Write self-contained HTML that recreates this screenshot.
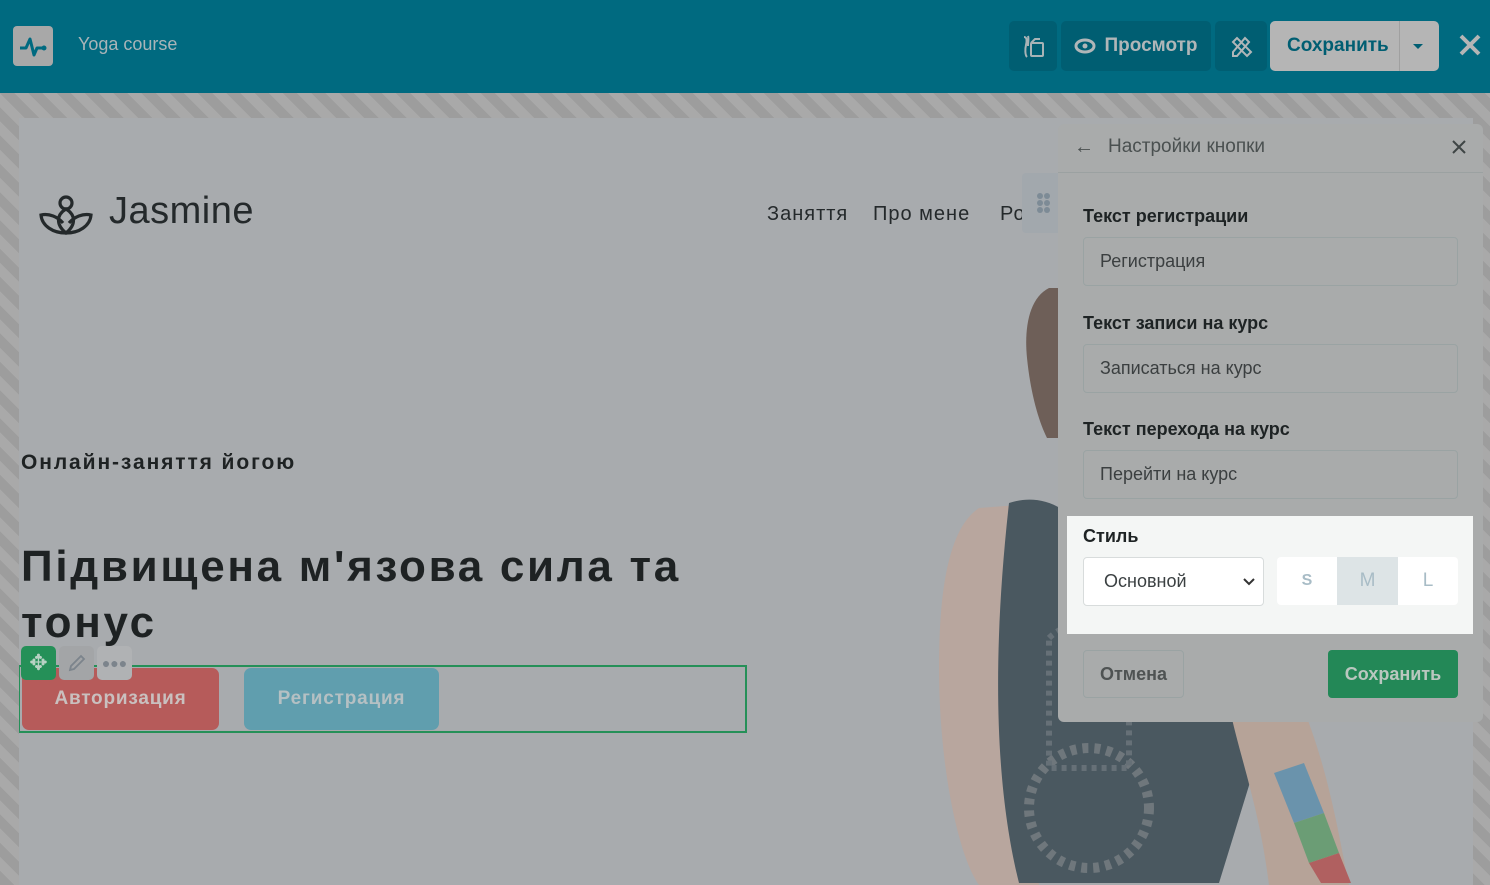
<!DOCTYPE html>
<html><head><meta charset="utf-8"><style>
*{box-sizing:border-box;margin:0;padding:0}
body{width:1490px;height:885px;overflow:hidden;font-family:"Liberation Sans","DejaVu Sans",sans-serif;background:#a3a3a3;position:relative}
.top{position:absolute;left:0;top:0;width:1490px;height:93px;background:#006a80}
.stripes{position:absolute;left:0;top:93px;width:1490px;height:792px;background:repeating-linear-gradient(45deg,#9d9d9d 0 10px,#a9a9a9 10px 20px)}
.page{position:absolute;left:19px;top:118px;width:1454px;height:767px;background:#a8abae;overflow:hidden}
.abs{position:absolute}
.btn{position:absolute;border-radius:5px;display:flex;align-items:center;justify-content:center;font-weight:bold}
.lbl{position:absolute;left:25px;font-size:18px;font-weight:bold;color:#1e2324}
.inp{position:absolute;left:25px;width:375px;height:49px;border:1px solid #9aa3a3;border-radius:4px;font-size:18px;color:#3b3f40;padding-left:16px;display:flex;align-items:center}
.nav{position:absolute;top:85px;font-size:20px;color:#24292b;letter-spacing:1px;white-space:nowrap}
</style></head><body>
<div class="top">
 <div class="abs" style="left:13px;top:26px;width:40px;height:40px;background:#a8a8a8;border-radius:4px">
  <svg width="40" height="40" viewBox="0 0 40 40"><path d="M7 22h6l4-9 4 16 3-7h6" fill="none" stroke="#006a80" stroke-width="3" stroke-linejoin="round"/><circle cx="31" cy="22" r="2.5" fill="#006a80"/></svg>
 </div>
 <div class="abs" style="left:78px;top:34px;font-size:18px;color:#a9b4b8">Yoga course</div>
 <div class="btn" style="left:1009px;top:21px;width:48px;height:50px;background:#005e72"><svg width="30" height="30" viewBox="0 0 30 30" fill="none" stroke="#a8b3b6" stroke-width="2"><path d="M6 6c3 0 3 4 2 8s-1 10 1 12M10 5c1 3 0 6 0 10"/><rect x="13" y="12" width="12" height="13" rx="1"/><path d="M13 12l4-4h5"/></svg></div>
 <div class="btn" style="left:1061px;top:21px;width:150px;height:50px;background:#005e72;color:#b0b6b8;font-size:19px"><svg width="22" height="16" viewBox="0 0 22 16" style="margin-right:8px"><ellipse cx="11" cy="8" rx="9" ry="6" fill="none" stroke="#b0b6b8" stroke-width="3"/><circle cx="11" cy="8" r="2.5" fill="#b0b6b8"/></svg>Просмотр</div>
 <div class="btn" style="left:1215px;top:21px;width:52px;height:50px;background:#005e72"><svg width="24" height="24" viewBox="0 0 24 24" fill="none" stroke="#b0b6b8" stroke-width="2"><path d="M4 18l12-14 4 4-12 14H4z"/><path d="M4 8l4-4 14 14-4 4z"/></svg></div>
 <div class="btn" style="left:1270px;top:21px;width:169px;height:50px;background:#b5b5b5;justify-content:flex-start;padding-left:17px;color:#005e72;font-size:19px">Сохранить</div>
 <div class="abs" style="left:1399px;top:21px;width:1px;height:50px;background:#a0a0a0"></div>
 <div class="abs" style="left:1413px;top:44px;border:5px solid transparent;border-top:5px solid #005e72;border-bottom:0"></div>
 <svg class="abs" style="left:1458px;top:33px" width="24" height="24" viewBox="0 0 24 24"><path d="M3 3l18 18M21 3L3 21" stroke="#b5b5b5" stroke-width="4"/></svg>
</div>
<div class="stripes"></div>
<div class="page">
 <svg class="abs" style="left:880px;top:140px" width="574" height="627" viewBox="880 140 574 627">
  <path d="M1030 170c-20 10-25 40-22 70 3 30 10 60 20 80l40 0 0-150z" fill="#6e5f58"/>
  <path d="M960 390c-30 20-40 80-40 160 0 100 20 190 40 217h60l-20-380z" fill="#b8a69e"/>
  <path d="M990 385c30-10 70 0 90 60l60 20 60-30c20 40 40 110 40 200l-40 130H1000c-20-80-30-200-10-380z" fill="#4a5860"/>
  <path d="M1200 430c30 40 60 100 80 150 30 70 40 140 50 187h-80c-10-80-30-130-40-180z" fill="#b6a398"/>
  <circle cx="1070" cy="690" r="60" fill="none" stroke="#6f777c" stroke-width="10" stroke-dasharray="6 6"/>
  <path d="M1030 520c20-20 60-20 80 0v130h-80z" fill="none" stroke="#667077" stroke-width="6" stroke-dasharray="5 5"/>
  <path d="M1255 655l30-10 20 50-30 10z" fill="#6a93ac"/><path d="M1275 705l30-10 15 40-30 10z" fill="#6b9d75"/><path d="M1290 745l30-10 12 30h-30z" fill="#b06060"/>
 </svg>
 <svg class="abs" style="left:20px;top:75px" width="56" height="44" viewBox="0 0 56 44" fill="none" stroke="#24292b" stroke-width="3.2"><circle cx="27" cy="10" r="6"/><path d="M27 40c-10-8-10-18 0-24 10 6 10 16 0 24z"/><path d="M27 40C14 40 3 33 2 22c8-2 17 2 22 8M27 40c13 0 24-7 25-18-8-2-17 2-22 8"/></svg>
 <div class="abs" style="left:90px;top:72px;font-size:38px;color:#24292b;letter-spacing:0.5px">Jasmine</div>
 <div class="nav" style="left:748px">Заняття</div>
 <div class="nav" style="left:854px">Про мене</div>
 <div class="nav" style="left:981px">Ро</div>
 <div class="abs" style="left:2px;top:333px;font-size:21px;font-weight:bold;color:#1e2223;letter-spacing:1.9px">Онлайн-заняття йогою</div>
 <div class="abs" style="left:2px;top:421px;font-size:44px;font-weight:bold;color:#1e2223;line-height:56px;letter-spacing:2.7px">Підвищена м'язова сила та<br>тонус</div>
 <div class="abs" style="left:-1px;top:547px;width:729px;height:68px;border:2px solid #259058"></div>
 <div class="btn" style="left:3px;top:550px;width:197px;height:62px;background:#b65b5a;color:#c9c0bf;font-size:19px;border-radius:7px;letter-spacing:0.8px">Авторизация</div>
 <div class="btn" style="left:225px;top:550px;width:195px;height:62px;background:#609eae;color:#b5c0c3;font-size:19px;border-radius:7px;letter-spacing:0.8px">Регистрация</div>
 <div class="btn" style="left:2px;top:528px;width:35px;height:34px;background:#259058;color:#b9d2c4;font-size:22px">✥</div>
 <div class="btn" style="left:40px;top:528px;width:35px;height:34px;background:#a3a5a7"><svg width="20" height="20" viewBox="0 0 20 20" fill="none" stroke="#7c848c" stroke-width="1.8"><path d="M3 17l1-4 10-10 3 3-10 10z"/></svg></div>
 <div class="btn" style="left:78px;top:528px;width:35px;height:34px;background:#b0b2b4;color:#7c848c;font-size:14px">●●●</div>
 <div class="abs" style="left:1003px;top:55px;width:40px;height:60px;background:#a2a8ad;border-radius:4px"><svg width="40" height="60"><g fill="#7d8b96"><circle cx="18" cy="23" r="3"/><circle cx="25" cy="23" r="3"/><circle cx="18" cy="30" r="3"/><circle cx="25" cy="30" r="3"/><circle cx="18" cy="37" r="3"/><circle cx="25" cy="37" r="3"/></g></svg></div>
</div>
<div class="abs" style="left:1058px;top:124px;width:425px;height:598px;background:#a9abab;border-radius:6px">
 <div class="abs" style="left:0;top:0;width:425px;height:49px;border-bottom:1px solid #9ba1a1"></div>
 <div class="abs" style="left:16px;top:12px;font-size:20px;color:#4a5050">←</div>
 <div class="abs" style="left:50px;top:12px;font-size:19px;color:#4a5050">Настройки кнопки</div>
 <svg class="abs" style="left:393px;top:15px" width="16" height="16"><path d="M2 2l12 12M14 2L2 14" stroke="#3f4545" stroke-width="2"/></svg>
 <div class="lbl" style="top:82px">Текст регистрации</div>
 <div class="inp" style="top:113px">Регистрация</div>
 <div class="lbl" style="top:189px">Текст записи на курс</div>
 <div class="inp" style="top:220px">Записаться на курс</div>
 <div class="lbl" style="top:295px">Текст перехода на курс</div>
 <div class="inp" style="top:326px">Перейти на курс</div>
 <div class="abs" style="left:9px;top:392px;width:406px;height:118px;background:#f4f6f5">
  <div class="abs" style="left:16px;top:10px;font-size:18px;font-weight:bold;color:#1e2324">Стиль</div>
  <div class="abs" style="left:16px;top:41px;width:181px;height:49px;background:#fff;border:1px solid #d8dcdc;border-radius:4px;font-size:18px;color:#3b4042;padding-left:20px;display:flex;align-items:center">Основной<svg style="position:absolute;right:8px;top:20px" width="12" height="8"><path d="M1 1l5 5 5-5" fill="none" stroke="#333" stroke-width="2"/></svg></div>
  <div class="abs" style="left:210px;top:41px;width:181px;height:48px;background:#fff;border-radius:4px;display:flex;font-size:19px;color:#a8bcc6">
   <div style="width:60px;display:flex;align-items:center;justify-content:center;font-size:16px;font-weight:bold">S</div>
   <div style="width:61px;display:flex;align-items:center;justify-content:center;background:#dde4e6">M</div>
   <div style="width:60px;display:flex;align-items:center;justify-content:center">L</div>
  </div>
 </div>
 <div class="btn" style="left:25px;top:526px;width:101px;height:48px;border:1px solid #9aa3a3;color:#4f5353;font-size:18px;border-radius:4px">Отмена</div>
 <div class="btn" style="left:270px;top:526px;width:130px;height:48px;background:#238857;color:#b9c7bf;font-size:18px;border-radius:4px">Сохранить</div>
</div>
</body></html>
